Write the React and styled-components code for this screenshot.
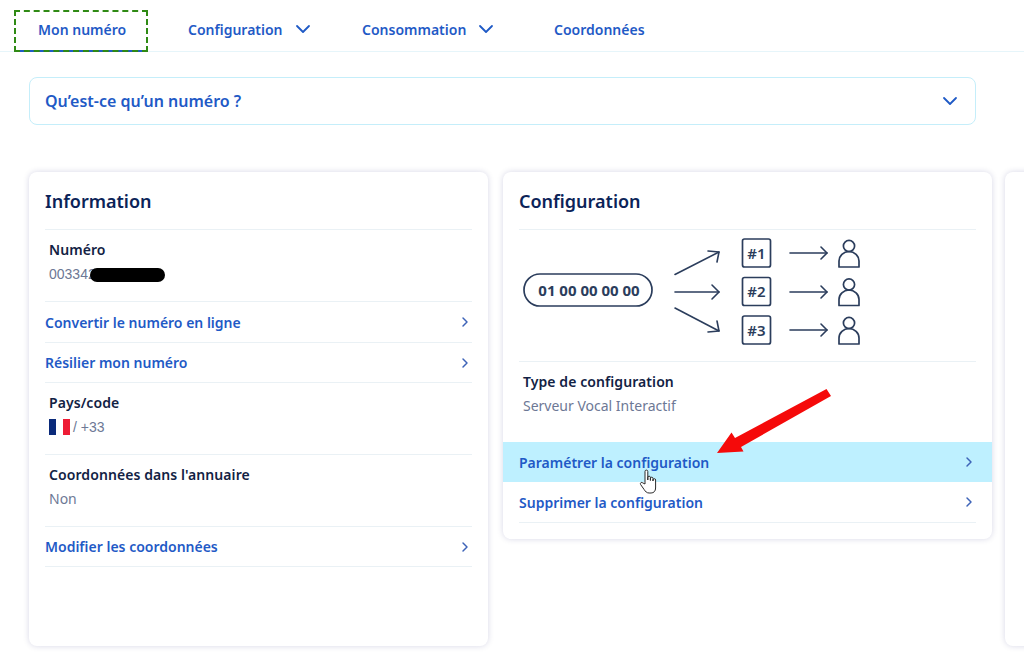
import React from 'react';
import styled, { createGlobalStyle } from 'styled-components';
import { ChevronDown, ChevronRight } from 'lucide-react';

const GlobalStyle = createGlobalStyle`
  html, body {
    margin: 0;
    padding: 0;
    background: #fff;
  }
  body {
    font-family: "Noto Sans", "Open Sans", sans-serif;
    color: #122244;
  }
`;

const Page = styled.div`
  position: relative;
  width: 1024px;
  height: 655px;
  overflow: hidden;
  background: #fff;
`;

const Nav = styled.nav`
  display: flex;
  height: 52px;
  box-sizing: border-box;
  padding: 10px 0 0 14px;
  border-bottom: 1px solid #e6f5fa;
`;

const Tab = styled.a`
  display: flex;
  align-items: center;
  box-sizing: border-box;
  width: ${(p) => p.$width}px;
  height: 42px;
  margin-left: ${(p) => p.$gap || 0}px;
  padding: 0 0 2px 24px;
  border-bottom: 2px solid transparent;
  font-size: 14px;
  font-weight: 600;
  color: #1f5ac6;

  ${(p) =>
    p.$active &&
    `
    border-bottom-color: #1f5ac6;
    outline: 2px dashed #2f8a14;
    outline-offset: -2px;
  `}

  svg {
    margin-left: 8px;
  }
`;

const Content = styled.main`
  padding: 25px 0 0 29px;
`;

const Accordion = styled.div`
  display: flex;
  align-items: center;
  justify-content: space-between;
  box-sizing: border-box;
  width: 947px;
  height: 48px;
  padding: 0 13px 0 15px;
  border: 1px solid #c5eefa;
  border-radius: 8px;
  font-size: 16px;
  font-weight: 600;
  color: #1f5ac6;
`;

const Cards = styled.div`
  display: flex;
  align-items: flex-start;
  gap: 15px;
  margin-top: 47px;
`;

const Card = styled.section`
  flex: none;
  box-sizing: border-box;
  width: ${(p) => p.$width}px;
  height: ${(p) => p.$height}px;
  padding: 0 16px;
  border-radius: 8px;
  background: #fff;
  box-shadow: 0 0 6px rgba(0, 14, 100, 0.16);
`;

const NextCard = styled(Card)`
  margin-left: -2px;
`;

const CardTitle = styled.h2`
  display: flex;
  align-items: center;
  box-sizing: border-box;
  height: 58px;
  margin: 0;
  border-bottom: 1px solid #eaf1f5;
  font-size: 18px;
  font-weight: 600;
  color: #0b2358;
`;

const Field = styled.div`
  position: relative;
  box-sizing: border-box;
  height: ${(p) => p.$height || 72}px;
  padding: 10px 0 0 4px;
  border-bottom: ${(p) => (p.$plain ? 'none' : '1px solid #eaf1f5')};
`;

const Label = styled.div`
  height: 20px;
  line-height: 20px;
  font-size: 14px;
  font-weight: 600;
  letter-spacing: 0.08px;
  color: #122244;
`;

const Value = styled.div`
  display: flex;
  align-items: center;
  gap: 3px;
  height: 20px;
  margin-top: 4px;
  line-height: 20px;
  font-size: 14px;
  color: #6d7895;
`;

const NumberValue = styled(Value)`
  font-family: "Liberation Sans", Arial, sans-serif;
`;

const Redaction = styled.span`
  position: absolute;
  left: 45px;
  top: 38px;
  width: 75px;
  height: 14px;
  border-radius: 7px;
  background: #000;
`;

const Flag = styled.span`
  display: inline-block;
  width: 21px;
  height: 16px;
  background: linear-gradient(90deg, #0a2a7a 33%, #fff 33%, #fff 66%, #ee1c35 66%);
`;

const ActionRow = styled.a`
  display: flex;
  align-items: center;
  justify-content: space-between;
  box-sizing: border-box;
  height: ${(p) => p.$height || 40}px;
  margin: 0 ${(p) => (p.$hover ? -16 : 0)}px;
  padding: 0 ${(p) => (p.$hover ? 16 : 0)}px;
  border-bottom: ${(p) => (p.$hover ? 'none' : '1px solid #eaf1f5')};
  background: ${(p) => (p.$hover ? '#bef0ff' : 'transparent')};
  font-size: 14px;
  font-weight: 600;
  color: #1f5ac6;

  svg {
    margin-right: -1px;
    color: #3d63b8;
  }
`;

const Illustration = styled.div`
  height: 131px;
  border-bottom: 1px solid #eaf1f5;

  svg {
    display: block;
  }
`;

const Overlay = styled.svg`
  position: absolute;
  left: ${(p) => p.$left}px;
  top: ${(p) => p.$top}px;
  pointer-events: none;
`;

const ink = '#2b3d5c';

const Person = ({ y }) => (
  <g fill="none" stroke={ink} strokeWidth="1.7">
    <circle cx="849" cy={y + 7} r="5.6" />
    <path d={`M839 ${y + 28} v-6 a10 9.5 0 0 1 20 0 v6 z`} strokeLinejoin="round" />
  </g>
);

const LongArrow = ({ x1, y1, x2, y2, head }) => (
  <g fill="none" stroke={ink} strokeWidth="1.6" strokeLinecap="round" strokeLinejoin="round">
    <path d={`M${x1} ${y1} L${x2} ${y2}`} />
    <path d={head} />
  </g>
);

const NumberBox = ({ y, label }) => (
  <g>
    <rect x="742.5" y={y} width="28" height="28" rx="2" fill="none" stroke={ink} strokeWidth="1.7" />
    <text x="756.5" y={y + 19.5} textAnchor="middle" fontFamily="Noto Sans, sans-serif" fontSize="15" fontWeight="600" fill={ink}>
      {label}
    </text>
  </g>
);

const Diagram = () => (
  <svg width="457" height="131" viewBox="519 230 457 131">
    <rect x="524" y="274" width="128" height="32" rx="16" fill="none" stroke={ink} strokeWidth="1.7" />
    <text x="589" y="295.5" textAnchor="middle" fontFamily="Noto Sans, sans-serif" fontSize="15" fontWeight="700" fill={ink}>
      01 00 00 00 00
    </text>
    <LongArrow x1={675} y1={274.5} x2={719} y2={252} head="M708 251 L719 252 L717 262" />
    <LongArrow x1={675} y1={292} x2={719} y2={292} head="M712 285 L719 292 L712 299" />
    <LongArrow x1={675} y1={308} x2={719} y2={331} head="M717 321 L719 331 L708 332" />
    {[
      { y: 239, arrow: 253, label: '#1' },
      { y: 277.5, arrow: 292, label: '#2' },
      { y: 316, arrow: 330, label: '#3' },
    ].map((item) => (
      <g key={item.label}>
        <NumberBox y={item.y} label={item.label} />
        <LongArrow
          x1={790}
          y1={item.arrow}
          x2={827}
          y2={item.arrow}
          head={`M821 ${item.arrow - 6} L827 ${item.arrow} L821 ${item.arrow + 6}`}
        />
        <Person y={item.y} />
      </g>
    ))}
  </svg>
);

export default function App() {
  return (
    <Page>
      <GlobalStyle />
      <Nav>
        <Tab $width={134} $active>Mon numéro</Tab>
        <Tab $width={174} $gap={16}>
          Configuration <ChevronDown size={24} strokeWidth={1.8} />
        </Tab>
        <Tab $width={192}>
          Consommation <ChevronDown size={24} strokeWidth={1.8} />
        </Tab>
        <Tab $width={139}>Coordonnées</Tab>
      </Nav>
      <Content>
        <Accordion>
          Qu’est-ce qu’un numéro ?
          <ChevronDown size={24} strokeWidth={1.8} />
        </Accordion>
        <Cards>
          <Card $width={459} $height={474}>
            <CardTitle>Information</CardTitle>
            <Field>
              <Label>Numéro</Label>
              <NumberValue>003342</NumberValue>
              <Redaction />
            </Field>
            <ActionRow $height={41}>
              Convertir le numéro en ligne <ChevronRight size={16} strokeWidth={2.2} />
            </ActionRow>
            <ActionRow>
              Résilier mon numéro <ChevronRight size={16} strokeWidth={2.2} />
            </ActionRow>
            <Field>
              <Label>Pays/code</Label>
              <NumberValue><Flag /> / +33</NumberValue>
            </Field>
            <Field>
              <Label>Coordonnées dans l'annuaire</Label>
              <Value>Non</Value>
            </Field>
            <ActionRow>
              Modifier les coordonnées <ChevronRight size={16} strokeWidth={2.2} />
            </ActionRow>
          </Card>
          <Card $width={489} $height={367}>
            <CardTitle>Configuration</CardTitle>
            <Illustration>
              <Diagram />
            </Illustration>
            <Field $height={80} $plain>
              <Label>Type de configuration</Label>
              <Value>Serveur Vocal Interactif</Value>
            </Field>
            <ActionRow $hover>
              Paramétrer la configuration <ChevronRight size={16} strokeWidth={2.2} />
            </ActionRow>
            <ActionRow $height={41}>
              Supprimer la configuration <ChevronRight size={16} strokeWidth={2.2} />
            </ActionRow>
          </Card>
          <NextCard $width={460} $height={474} />
        </Cards>
      </Content>
      <Overlay $left={700} $top={380} width="140" height="80" viewBox="700 380 140 80">
        <polygon points="826.5,389 831,396 741,447 743.5,451.5 717,453 731.5,432.5 735,438" fill="#f50a0a" />
      </Overlay>
      <Overlay $left={636} $top={466} width="24" height="30" viewBox="636 466 24 30">
        <path
          d="M645 484 V471.5 a1.4 1.4 0 0 1 2.8 0 V480 V477.5 a1.3 1.3 0 0 1 2.6 0 V480.5 V478.5 a1.3 1.3 0 0 1 2.6 0 V481 V480 a1.3 1.3 0 0 1 2.6 0 V488 c0 3 -1.8 5 -4.5 5 h-2 c-2.5 0 -3.6 -1.5 -5 -3.5 l-3.5 -5 c-0.9 -1.6 1 -2.8 2.2 -1.6 z"
          fill="#fff"
          stroke="#2a2a2a"
          strokeWidth="1"
          strokeLinejoin="round"
        />
      </Overlay>
    </Page>
  );
}
